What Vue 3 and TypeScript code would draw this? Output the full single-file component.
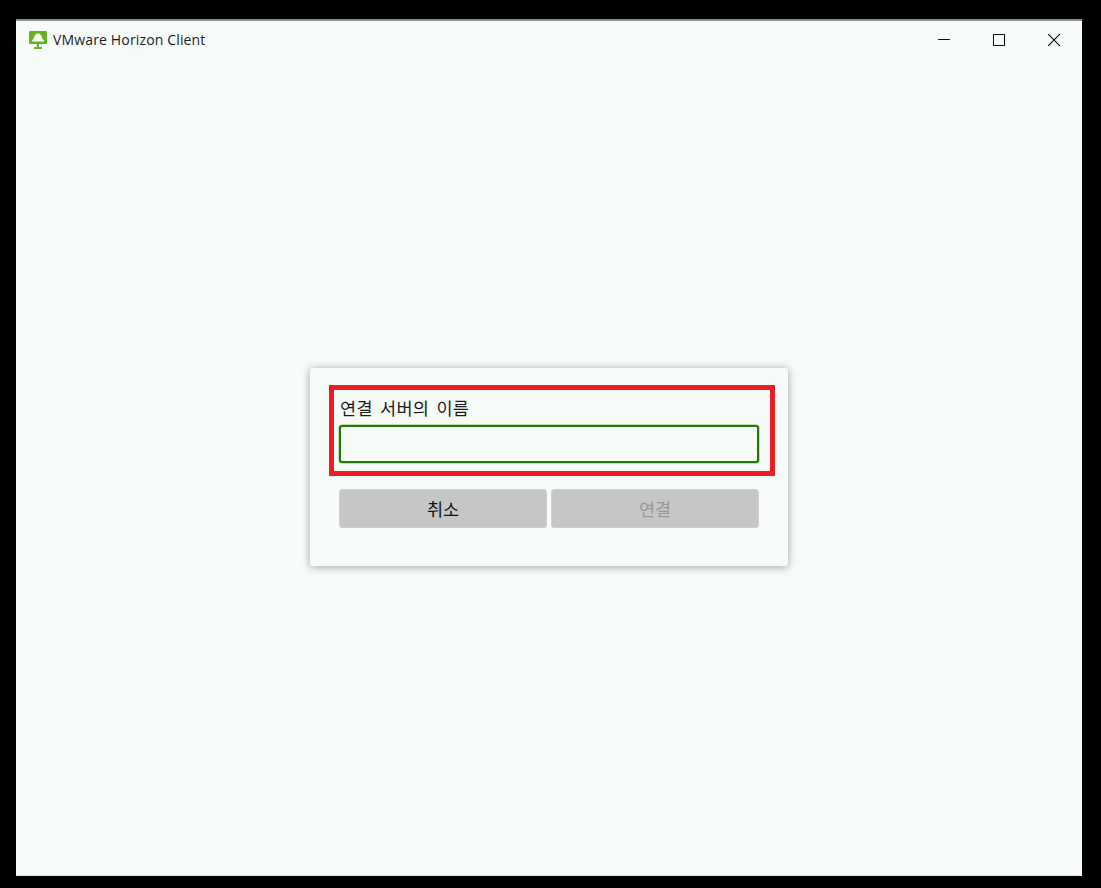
<script setup lang="ts">
const title = 'VMware Horizon Client'
</script>

<template>
  <div class="screen">
    <div class="window">
      <header class="titlebar">
        <div class="brand">
          <svg class="logo" width="18" height="19" viewBox="0 0 18 19" aria-hidden="true">
            <path fill="#63b51c" d="M1 0h16a1 1 0 0 1 1 1v11a1 1 0 0 1-1 1H1a1 1 0 0 1-1-1V1a1 1 0 0 1 1-1z" />
            <path fill="#f8fcf9" d="M3 10.500c0-1 .5-2 1.500-2.500C5 4.500 6.800 2.500 9 2.500s4 2 4.500 5.500c1 .5 1.500 1.500 1.500 2.500z" />
            <path fill="#63b51c" d="M8 13h2v3H8z" />
            <path fill="#63b51c" d="M5 16h8v2H5z" />
          </svg>
          <span class="app-name">{{ title }}</span>
        </div>
        <div class="controls">
          <button class="control" aria-label="최소화">
            <svg width="12" height="12" viewBox="0 0 12 12"><path d="M0 5.500h12" stroke="#111" fill="none" /></svg>
          </button>
          <button class="control" aria-label="최대화">
            <svg width="12" height="12" viewBox="0 0 12 12"><rect x="0.500" y="0.500" width="11" height="11" stroke="#111" fill="none" /></svg>
          </button>
          <button class="control" aria-label="닫기">
            <svg width="12" height="12" viewBox="0 0 12 12"><path d="M0 0l12 12M12 0L0 12" stroke="#111" stroke-width="1.200" fill="none" /></svg>
          </button>
        </div>
      </header>
      <main class="content">
        <section class="card">
          <div class="highlight">
            <label class="label" for="server">연결 서버의 이름</label>
            <input id="server" class="input" type="text" />
          </div>
          <div class="actions">
            <button class="btn">취소</button>
            <button class="btn disabled" disabled>연결</button>
          </div>
        </section>
      </main>
    </div>
  </div>
</template>

<style>
html, body { margin: 0; background: #000; }
</style>

<style scoped>
.screen {
  width: 1101px;
  height: 888px;
  box-sizing: border-box;
  padding: 19px 19px 12px 16px;
  background: #000;
  font-family: "Noto Sans CJK KR", sans-serif;
}
.window {
  height: 100%;
  display: flex;
  flex-direction: column;
  background: #f8fcf9;
  border-top: 2px solid #8e8e8e;
  border-bottom: 1px solid #dfe5e1;
  box-sizing: border-box;
}
.titlebar {
  height: 40px;
  flex: none;
  display: flex;
  align-items: center;
  justify-content: space-between;
}
.brand {
  display: flex;
  align-items: center;
  gap: 6px;
  padding-left: 13px;
}
.logo { display: block; margin-top: -1px; }
.app-name {
  font-family: "Open Sans", sans-serif;
  font-size: 14px;
  letter-spacing: 0.15px;
  line-height: 20px;
  color: #1a1a2a;
  margin-top: -3px;
}
.controls { display: flex; padding-right: 1px; margin-top: -2px; }
.control {
  width: 55px;
  height: 38px;
  padding: 0;
  border: 0;
  background: none;
  display: flex;
  align-items: center;
  justify-content: center;
}
.content {
  flex: 1;
  display: flex;
  align-items: center;
  justify-content: center;
  padding-bottom: 3px;
}
.card {
  width: 478px;
  height: 198px;
  box-sizing: border-box;
  padding: 17px 29px 0 19px;
  background: #f8fcf9;
  border-radius: 3px;
  box-shadow: 0 1px 8px rgba(0, 0, 0, 0.36);
}
.highlight {
  width: 446px;
  height: 91px;
  box-sizing: border-box;
  border: 5px solid #ed1c24;
  padding: 5px 11px 8px 5px;
  display: flex;
  flex-direction: column;
}
.label {
  height: 27px;
  padding-left: 1px;
  font-size: 17.500px;
  letter-spacing: 0.3px;
  word-spacing: 3px;
  line-height: 25px;
  color: #1a1a1a;
}
.input {
  width: 420px;
  height: 38px;
  box-sizing: border-box;
  border: 2px solid #237a00;
  border-radius: 3px;
  background: #f8fcf9;
  box-shadow: 0 0 0 0.5px rgba(35, 122, 0, 0.5);
  outline: none;
  margin-top: auto;
}
.actions {
  display: flex;
  gap: 4px;
  margin: 13px 0 0 10px;
}
.btn {
  width: 208px;
  height: 39px;
  box-sizing: border-box;
  padding: 0;
  border: 1px solid #cfcfcf;
  border-radius: 3px;
  background: #c6c6c6;
  font-family: "Noto Sans CJK KR", sans-serif;
  font-size: 17.500px;
  color: #111;
}
.btn.disabled { color: #969696; }
</style>
